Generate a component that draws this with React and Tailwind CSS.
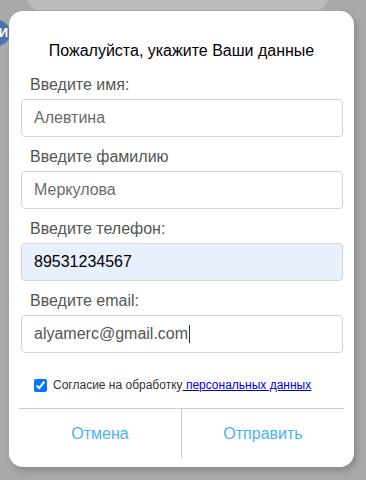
import React from 'react';

const fields = [
  { label: 'Введите имя:', value: 'Алевтина', tone: 'text-[#6b6b6b] bg-white' },
  { label: 'Введите фамилию', value: 'Меркулова', tone: 'text-[#6b6b6b] bg-white' },
  { label: 'Введите телефон:', value: '89531234567', tone: 'text-black bg-[#e8f0fe]' },
  { label: 'Введите email:', value: 'alyamerc@gmail.com', tone: 'text-[#555] bg-white', caret: true },
];

const Field = ({ label, value, tone, caret }) => (
  <div className="flex flex-col">
    <span className="mb-[5px] pl-[9px] text-[16px] leading-[18px] text-[#555]">{label}</span>
    <div className={`flex h-[38px] items-center rounded-[4px] border border-[#d0d4da] px-[12px] text-[16px] ${tone}`}>
      {value}
      {caret && <span className="ml-[1px] inline-block h-[18px] w-px bg-[#333]" />}
    </div>
  </div>
);

const App = () => {
  return (
    <div className="relative h-[480px] w-[366px] overflow-hidden bg-[#a9a9a9] pl-[9px] pt-[11px] font-['Liberation_Sans',Arial,sans-serif]">
      {/* dimmed page behind the modal */}
      <div className="absolute left-[27px] top-[-20px] h-[30px] w-[301px] rounded-[12px] bg-[#bbbbbb]" />
      <div className="absolute left-[-16px] top-[20px] flex h-[26px] w-[26px] items-center justify-end rounded-full bg-[#4a76ad] pr-[2px] text-[13px] font-bold text-white">
        И
      </div>

      {/* Modal */}
      <div className="relative flex h-[456px] w-[345px] flex-col rounded-[14px] bg-white shadow-[3px_4px_6px_rgba(0,0,0,0.18)]">
        <h2 className="pt-[31px] text-center text-[16px] leading-[18px] text-black">
          Пожалуйста, укажите Ваши данные
        </h2>

        <div className="mt-[16px] flex flex-col gap-[11px] pl-[12px] pr-[11px]">
          {fields.map((f) => (
            <Field key={f.label} {...f} />
          ))}
        </div>

        <label className="mt-[24px] flex h-[16px] items-center pl-[25px] text-[12px] text-[#333]">
          <input type="checkbox" defaultChecked className="m-0 h-[13px] w-[13px]" />
          <span className="ml-[6px]">
            Согласие на обработку
            <a href="#" className="text-[#0000ee] underline"> персональных данных</a>
          </span>
        </label>

        <div className="mx-[10px] mt-[15px] flex border-t border-[#cccccc]">
          <button className="flex h-[49px] flex-1 items-center justify-center border-r border-[#cccccc] text-[16px] text-[#4db2f5]">
            Отмена
          </button>
          <button className="flex h-[49px] flex-1 items-center justify-center text-[16px] text-[#4db2f5]">
            Отправить
          </button>
        </div>
      </div>
    </div>
  );
};

export default App;
